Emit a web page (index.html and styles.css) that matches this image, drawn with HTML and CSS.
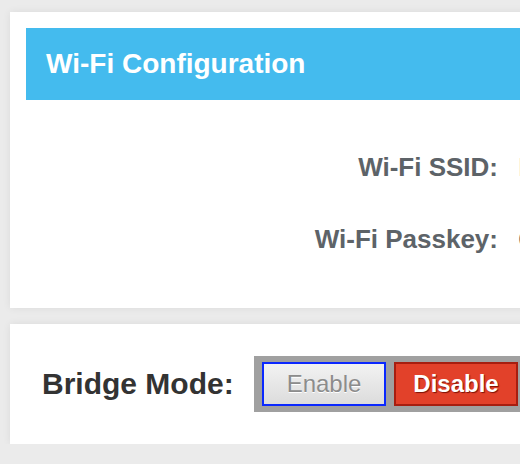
FILE: index.html
```html
<!DOCTYPE html>
<html>
<head>
<meta charset="utf-8">
<link rel="stylesheet" href="styles.css">
</head>
<body>
<div class="page">
  <section class="card card-config">
    <header class="card-header">
      <h1 class="card-title">Wi-Fi Configuration</h1>
    </header>
    <div class="form">
      <div class="form-label">Wi-Fi SSID:</div>
      <div class="form-value">NETGEAR-5G</div>
      <div class="form-label">Wi-Fi Passkey:</div>
      <div class="form-value">Corporate123</div>
    </div>
  </section>
  <section class="card card-bridge">
    <div class="bridge-label">Bridge Mode:</div>
    <div class="toggle-group">
      <button class="toggle toggle-enable">Enable</button>
      <button class="toggle toggle-disable">Disable</button>
    </div>
  </section>
</div>
</body>
</html>
```
FILE: styles.css
```css
html, body {
  margin: 0;
  padding: 0;
  overflow: hidden;
  background: #ebebeb;
  font-family: "Liberation Sans", Arial, Helvetica, sans-serif;
}

.page {
  padding: 12px 0 0 10px;
  display: flex;
  flex-direction: column;
  gap: 16px;
  width: 800px;
}

.card {
  background: #ffffff;
  box-shadow: 0 0 8px rgba(0, 0, 0, 0.07);
}

.card-config {
  padding: 16px;
}

.card-header {
  background: #44bbee;
  height: 72px;
  display: flex;
  align-items: center;
  padding-left: 20px;
}

.card-title {
  margin: 0;
  color: #ffffff;
  font-size: 28px;
  font-weight: bold;
  line-height: 32px;
}

.form {
  display: grid;
  grid-template-columns: 472px 1fr;
  column-gap: 20px;
  row-gap: 42px;
  padding: 52px 0 38px;
  font-size: 26px;
  line-height: 30px;
}

.form-label {
  text-align: right;
  font-weight: bold;
  color: #5d6368;
}

.form-value {
  color: #5d6368;
  white-space: nowrap;
}

.card-bridge {
  height: 120px;
  box-sizing: border-box;
  padding: 0 0 0 32px;
  display: flex;
  align-items: center;
}

.bridge-label {
  flex: 0 0 212px;
  font-size: 30px;
  line-height: 34px;
  font-weight: bold;
  color: #333333;
}

.toggle-group {
  background: #a0a0a0;
  padding: 6px 8px;
  display: flex;
  gap: 8px;
}

.toggle {
  width: 124px;
  height: 44px;
  box-sizing: border-box;
  margin: 0;
  padding: 0;
  font-family: "Liberation Sans", Arial, Helvetica, sans-serif;
  font-size: 24px;
  line-height: 40px;
  cursor: pointer;
}

.toggle-enable {
  border: 2px solid #0a28ff;
  background: linear-gradient(#f2f2f2, #dcdcdc);
  color: #8c8c8c;
  text-shadow: 0 1px 0 #ffffff;
}

.toggle-disable {
  border: 2px solid #a71e10;
  background: #e2412a;
  color: #ffffff;
  font-weight: bold;
  text-shadow: 1px 1px 1px #7d1206;
}
```
